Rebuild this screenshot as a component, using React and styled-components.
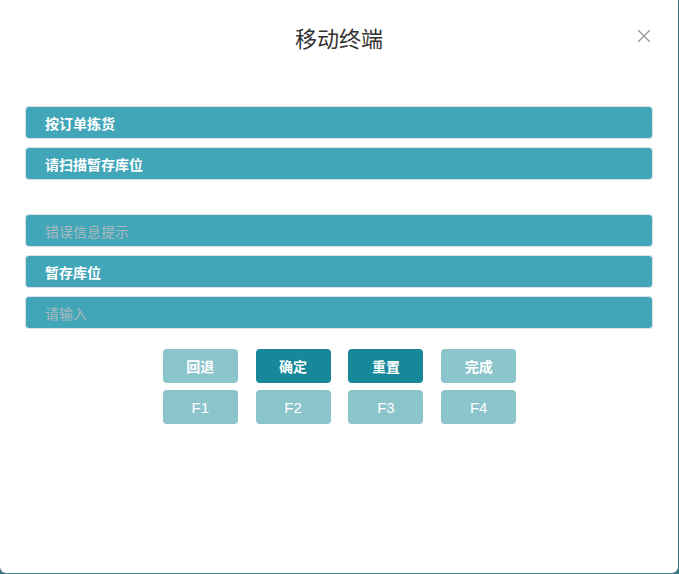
import React from 'react';
import styled, { createGlobalStyle } from 'styled-components';

const GlobalStyle = createGlobalStyle`
    html, body {
        margin: 0;
        padding: 0;
        background: #3f7f89;
        font-family: "Noto Sans CJK SC", "Liberation Sans", sans-serif;
    }
`;

const Dialog = styled.div`
    box-sizing: border-box;
    width: 678px;
    height: 573px;
    background: #fff;
    border-radius: 0 0 6px 6px;
    box-shadow: 0 1px 2px rgba(0, 0, 0, 0.35);
    padding: 0 25px;
    display: flex;
    flex-direction: column;
`;

const Header = styled.div`
    position: relative;
    height: 81px;
    display: flex;
    align-items: center;
    justify-content: center;
    padding-bottom: 8px;
    box-sizing: border-box;
`;

const Title = styled.h2`
    margin: 0;
    font-size: 22px;
    font-weight: 400;
    color: #333;
`;

const Close = styled.button`
    position: absolute;
    right: 0;
    top: 27px;
    width: 18px;
    height: 18px;
    padding: 0;
    border: none;
    background: none;
    cursor: pointer;
`;

const Group = styled.div`
    display: flex;
    flex-direction: column;
    gap: 8px;
    margin-top: ${p => p.$top}px;
`;

const Field = styled.div`
    box-sizing: border-box;
    height: 33px;
    display: flex;
    align-items: center;
    padding-left: 19px;
    background: #42a6b9;
    border: 1px solid #dcdfe6;
    border-radius: 4px;
    font-size: 14px;
    font-weight: ${p => (p.$placeholder ? 400 : 700)};
    color: ${p => (p.$placeholder ? '#aab9bd' : '#fff')};
`;

const ButtonGrid = styled.div`
    display: grid;
    grid-template-columns: repeat(4, 75px);
    column-gap: 17.8px;
    row-gap: 7px;
    justify-content: center;
    margin-top: 20px;
    padding-left: 1px;
`;

const KeyButton = styled.button`
    height: 34px;
    border: none;
    border-radius: 4px;
    background: ${p => (p.$primary ? '#16889a' : '#8cc4cc')};
    color: #fff;
    font-family: "Noto Sans CJK SC", "Liberation Sans", sans-serif;
    font-size: 14px;
    font-weight: 700;
    cursor: pointer;
    padding: 0;
`;

const FKey = styled(KeyButton)`
    font-family: "Liberation Sans", sans-serif;
    font-weight: 400;
    font-size: 15px;
`;

export default function App() {
    const actions = [
        { label: '回退' },
        { label: '确定', primary: true },
        { label: '重置', primary: true },
        { label: '完成' },
    ];
    return (
        <>
            <GlobalStyle />
            <Dialog>
                <Header>
                    <Title>移动终端</Title>
                    <Close aria-label="close">
                        <svg width="18" height="18" viewBox="0 0 18 18">
                            <path d="M3 3L15 15M15 3L3 15" stroke="#999" strokeWidth="1.3" fill="none" />
                        </svg>
                    </Close>
                </Header>
                <Group $top={25}>
                    <Field>按订单拣货</Field>
                    <Field>请扫描暂存库位</Field>
                </Group>
                <Group $top={34}>
                    <Field $placeholder>错误信息提示</Field>
                    <Field>暂存库位</Field>
                    <Field $placeholder>请输入</Field>
                </Group>
                <ButtonGrid>
                    {actions.map(a => (
                        <KeyButton key={a.label} $primary={a.primary}>
                            {a.label}
                        </KeyButton>
                    ))}
                    {['F1', 'F2', 'F3', 'F4'].map(k => (
                        <FKey key={k}>{k}</FKey>
                    ))}
                </ButtonGrid>
            </Dialog>
        </>
    );
}
